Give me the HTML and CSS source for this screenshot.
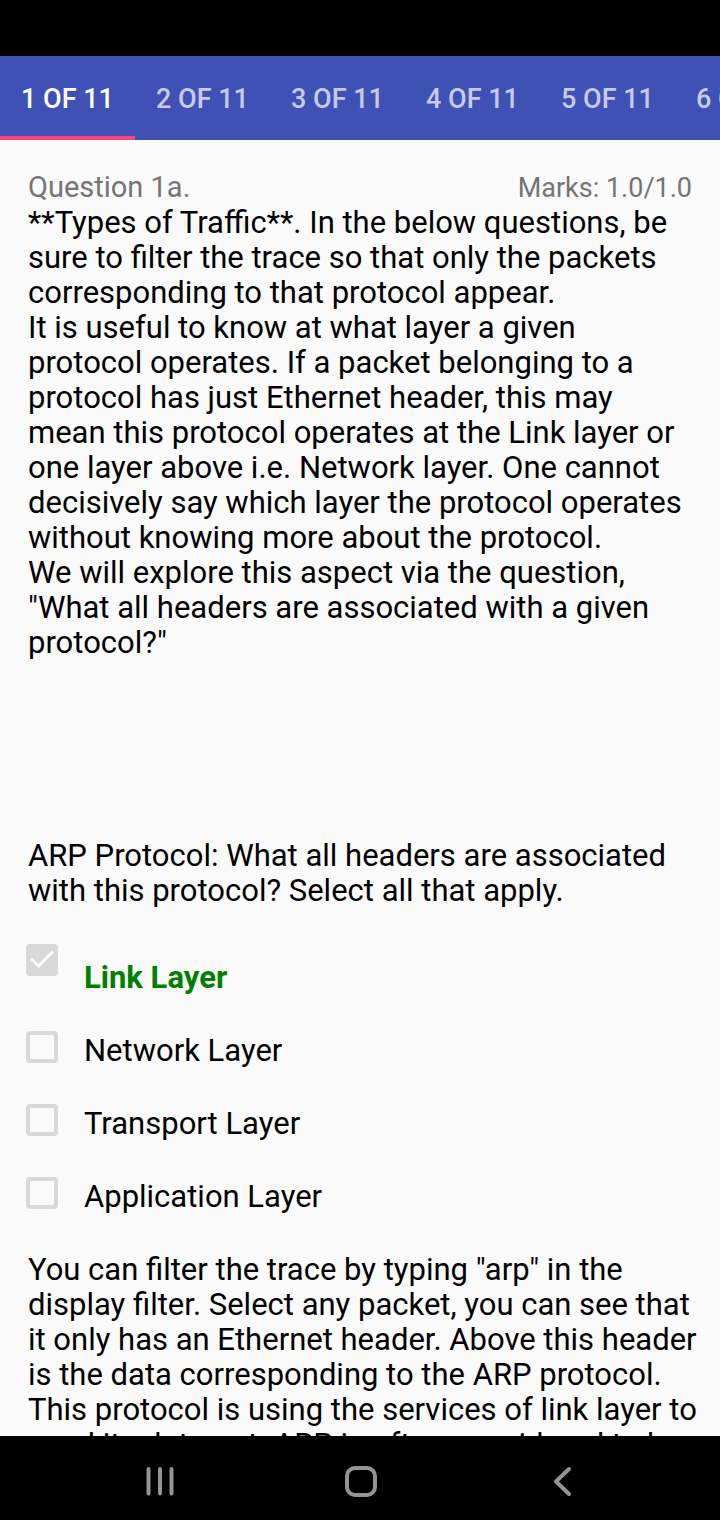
FILE: index.html
```html
<!DOCTYPE html>
<html lang="en">
<head>
<meta charset="utf-8">
<meta name="viewport" content="width=device-width, initial-scale=1">
<title>Question 1a</title>
<link rel="stylesheet" href="styles.css">
</head>
<body>
<div class="app">
  <div class="status-bar"></div>
  <nav class="tabs" role="tablist" aria-label="Questions">
    <button class="tab tab-active" role="tab" aria-selected="true">1 OF 11</button>
    <button class="tab" role="tab">2 OF 11</button>
    <button class="tab" role="tab">3 OF 11</button>
    <button class="tab" role="tab">4 OF 11</button>
    <button class="tab" role="tab">5 OF 11</button>
    <button class="tab" role="tab">6 OF 11</button>
  </nav>
  <main class="content">
    <header class="question-head">
      <span class="question-number">Question 1a.</span>
      <span class="marks">Marks: 1.0/1.0</span>
    </header>
    <div class="intro">
      <p>**Types of Traffic**. In the below questions, be sure to filter the trace so that only the packets corresponding to that protocol appear.</p>
      <p>It is useful to know at what layer a given protocol operates. If a packet belonging to a protocol has just Ethernet header, this may mean this protocol operates at the Link layer or one layer above i.e. Network layer. One cannot decisively say which layer the protocol operates without knowing more about the protocol.</p>
      <p>We will explore this aspect via the question, "What all headers are associated with a given protocol?"</p>
    </div>
    <fieldset class="options">
      <legend>ARP Protocol: What all headers are associated with this protocol? Select all that apply.</legend>
      <div class="option option-correct">
        <input class="box" type="checkbox" id="link" checked disabled>
        <label for="link">Link Layer</label>
      </div>
      <div class="option">
        <input class="box" type="checkbox" id="network" disabled>
        <label for="network">Network Layer</label>
      </div>
      <div class="option">
        <input class="box" type="checkbox" id="transport" disabled>
        <label for="transport">Transport Layer</label>
      </div>
      <div class="option">
        <input class="box" type="checkbox" id="application" disabled>
        <label for="application">Application Layer</label>
      </div>
    </fieldset>
    <p class="explanation">You can filter the trace by typing "arp" in the display filter. Select any packet, you can see that it only has an Ethernet header. Above this header is the data corresponding to the ARP protocol. This protocol is using the services of link layer to send its data out. ARP is often considered to be</p>
  </main>
  <nav class="system-nav" aria-label="System">
    <button class="nav-button" aria-label="Recent apps">
      <svg width="40" height="40" viewBox="0 0 40 40"><path d="M9.500 8V32.500M21 8V32.500M32.500 8V32.500"/></svg>
    </button>
    <button class="nav-button" aria-label="Home">
      <svg width="40" height="40" viewBox="0 0 40 40"><rect x="7" y="7" width="28" height="27" rx="8"/></svg>
    </button>
    <button class="nav-button" aria-label="Back">
      <svg width="40" height="40" viewBox="0 0 40 40"><path d="M28 8L15 20.500L28 33"/></svg>
    </button>
  </nav>
</div>
</body>
</html>
```
FILE: styles.css
```css
*,
*::before {
  box-sizing: border-box;
}

body {
  margin: 0;
  background: #fafafa;
  color: #000;
  font-family: Roboto, "Liberation Sans", sans-serif;
  font-size: 31px;
  line-height: 35px;
}

p {
  margin: 0;
}

button {
  border: 0;
  background: none;
  font: inherit;
}

.app {
  display: flex;
  flex-direction: column;
  height: 100vh;
}

.status-bar {
  flex: none;
  height: 56px;
  background: #000;
}

.tabs {
  display: flex;
  flex: none;
  overflow: hidden;
  background: #3f51b5;
}

.tab {
  flex: none;
  min-width: 135px;
  height: 84px;
  padding: 6px 0 0;
  border-bottom: 4px solid transparent;
  color: #c5cbe9;
  font-size: 27px;
  font-weight: 500;
  white-space: nowrap;
}

.tab-active {
  border-bottom-color: #ff4081;
  color: #fff;
}

.content {
  flex: 1;
  min-height: 0;
  overflow: hidden;
  padding: 30px 20px 0 28px;
}

.question-head {
  display: flex;
  align-items: baseline;
  justify-content: space-between;
  height: 35px;
  padding-right: 8px;
  color: #757575;
}

.question-number {
  font-size: 29px;
}

.marks {
  font-size: 27px;
}

.intro {
  margin-bottom: 178px;
  padding-right: 8px;
}

.options {
  display: flex;
  flex-direction: column;
  gap: 36px;
  min-width: 0;
  margin: 0 0 38px;
  padding: 0;
  border: 0;
}

.options legend {
  margin-bottom: 36px;
  padding: 0;
}

.option {
  display: flex;
  align-items: flex-start;
  gap: 26px;
  margin-left: -2px;
}

.option label {
  padding-top: 2px;
}

.option-correct label {
  padding-top: 16px;
  color: #008000;
  font-weight: 700;
}

.box {
  appearance: none;
  flex: none;
  width: 32px;
  height: 32px;
  margin: 0;
  border: 4px solid #d8d8d8;
  border-radius: 4px;
}

.box:checked {
  display: flex;
  align-items: flex-start;
  justify-content: center;
  background: #d8d8d8;
}

.box:checked::before {
  content: "";
  flex: none;
  width: 22px;
  height: 12px;
  margin-top: 2px;
  border: solid #fafafa;
  border-width: 0 0 3px 3px;
  transform: rotate(-45deg);
}

.system-nav {
  display: flex;
  flex: none;
  justify-content: center;
  gap: 161px;
  height: 84px;
  background: #000;
}

.nav-button {
  display: flex;
  align-items: center;
  padding: 6px 0 0;
}

.nav-button svg {
  fill: none;
  stroke: #949494;
  stroke-width: 4;
  stroke-linecap: round;
  stroke-linejoin: round;
}
```
